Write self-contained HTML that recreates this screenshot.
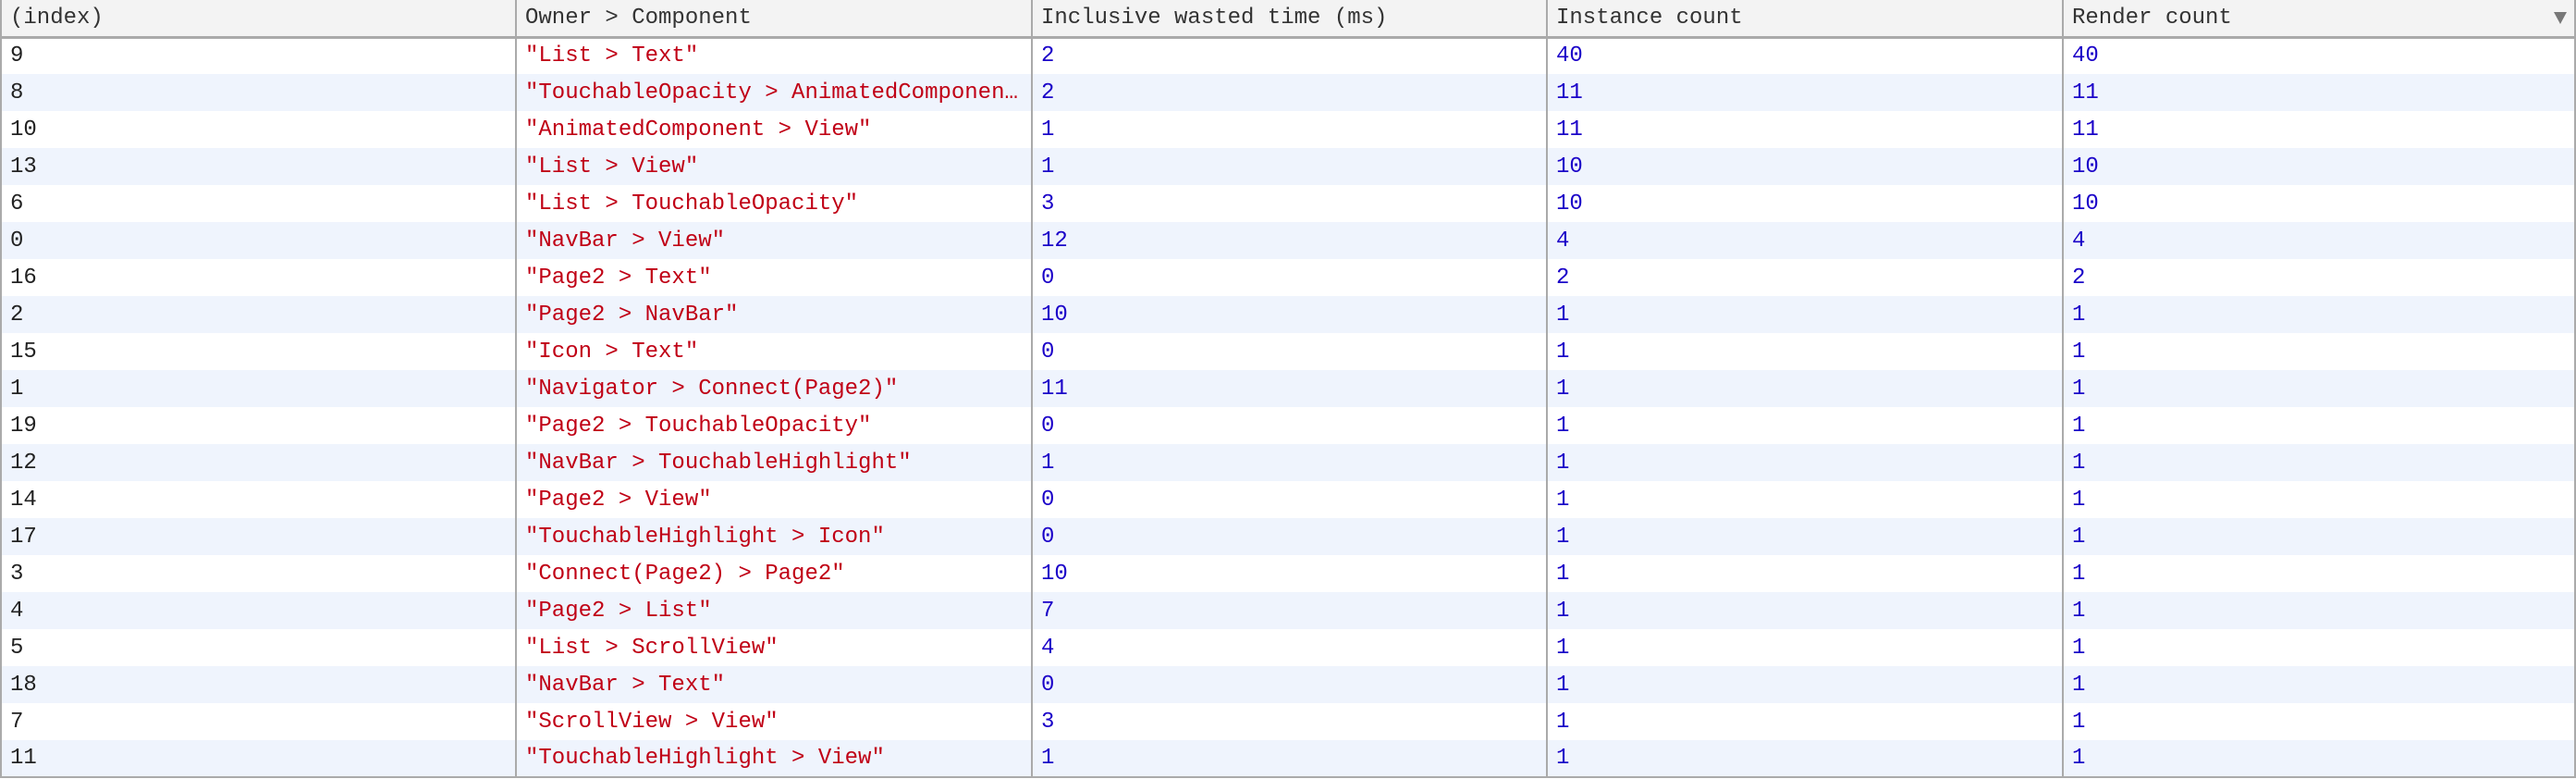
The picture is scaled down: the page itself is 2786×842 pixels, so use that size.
<!DOCTYPE html>
<html><head><meta charset="utf-8"><style>
html,body{margin:0;padding:0;background:#fff;}
body{width:2786px;height:842px;overflow:hidden;font-family:"Liberation Mono","DejaVu Sans Mono",monospace;font-size:24px;}
table{border-collapse:collapse;table-layout:fixed;width:2786px;border-left:2px solid #aaa;border-right:2px solid #aaa;border-bottom:2px solid #aaa;}
td,th{height:40px;padding:0 0 0 9px;border-left:2px solid #aaa;white-space:nowrap;overflow:hidden;text-overflow:ellipsis;text-align:left;font-weight:normal;color:#222;box-sizing:border-box;}
td:first-child,th:first-child{border-left:none;}
th{background:#f3f3f3;height:40px;border-bottom:3px solid #aaa;position:relative;color:#333;}
tr:nth-child(even) td{background:#eff4fd;}
.s{color:#c00015;}
.n{color:#1a00c8;}
.arrow{position:absolute;right:8px;top:13px;width:0;height:0;border-left:7px solid transparent;border-right:7px solid transparent;border-top:13px solid #777;}
</style></head><body>
<table>
<colgroup><col style="width:557px"><col style="width:558px"><col style="width:557px"><col style="width:558px"><col></colgroup>
<thead><tr><th>(index)</th><th>Owner &gt; Component</th><th>Inclusive wasted time (ms)</th><th>Instance count</th><th>Render count<span class="arrow"></span></th></tr></thead>
<tbody>
<tr><td>9</td><td class="s">"List &gt; Text"</td><td class="n">2</td><td class="n">40</td><td class="n">40</td></tr>
<tr><td>8</td><td class="s">"TouchableOpacity &gt; AnimatedComponent"</td><td class="n">2</td><td class="n">11</td><td class="n">11</td></tr>
<tr><td>10</td><td class="s">"AnimatedComponent &gt; View"</td><td class="n">1</td><td class="n">11</td><td class="n">11</td></tr>
<tr><td>13</td><td class="s">"List &gt; View"</td><td class="n">1</td><td class="n">10</td><td class="n">10</td></tr>
<tr><td>6</td><td class="s">"List &gt; TouchableOpacity"</td><td class="n">3</td><td class="n">10</td><td class="n">10</td></tr>
<tr><td>0</td><td class="s">"NavBar &gt; View"</td><td class="n">12</td><td class="n">4</td><td class="n">4</td></tr>
<tr><td>16</td><td class="s">"Page2 &gt; Text"</td><td class="n">0</td><td class="n">2</td><td class="n">2</td></tr>
<tr><td>2</td><td class="s">"Page2 &gt; NavBar"</td><td class="n">10</td><td class="n">1</td><td class="n">1</td></tr>
<tr><td>15</td><td class="s">"Icon &gt; Text"</td><td class="n">0</td><td class="n">1</td><td class="n">1</td></tr>
<tr><td>1</td><td class="s">"Navigator &gt; Connect(Page2)"</td><td class="n">11</td><td class="n">1</td><td class="n">1</td></tr>
<tr><td>19</td><td class="s">"Page2 &gt; TouchableOpacity"</td><td class="n">0</td><td class="n">1</td><td class="n">1</td></tr>
<tr><td>12</td><td class="s">"NavBar &gt; TouchableHighlight"</td><td class="n">1</td><td class="n">1</td><td class="n">1</td></tr>
<tr><td>14</td><td class="s">"Page2 &gt; View"</td><td class="n">0</td><td class="n">1</td><td class="n">1</td></tr>
<tr><td>17</td><td class="s">"TouchableHighlight &gt; Icon"</td><td class="n">0</td><td class="n">1</td><td class="n">1</td></tr>
<tr><td>3</td><td class="s">"Connect(Page2) &gt; Page2"</td><td class="n">10</td><td class="n">1</td><td class="n">1</td></tr>
<tr><td>4</td><td class="s">"Page2 &gt; List"</td><td class="n">7</td><td class="n">1</td><td class="n">1</td></tr>
<tr><td>5</td><td class="s">"List &gt; ScrollView"</td><td class="n">4</td><td class="n">1</td><td class="n">1</td></tr>
<tr><td>18</td><td class="s">"NavBar &gt; Text"</td><td class="n">0</td><td class="n">1</td><td class="n">1</td></tr>
<tr><td>7</td><td class="s">"ScrollView &gt; View"</td><td class="n">3</td><td class="n">1</td><td class="n">1</td></tr>
<tr><td>11</td><td class="s">"TouchableHighlight &gt; View"</td><td class="n">1</td><td class="n">1</td><td class="n">1</td></tr>
</tbody></table>
</body></html>
